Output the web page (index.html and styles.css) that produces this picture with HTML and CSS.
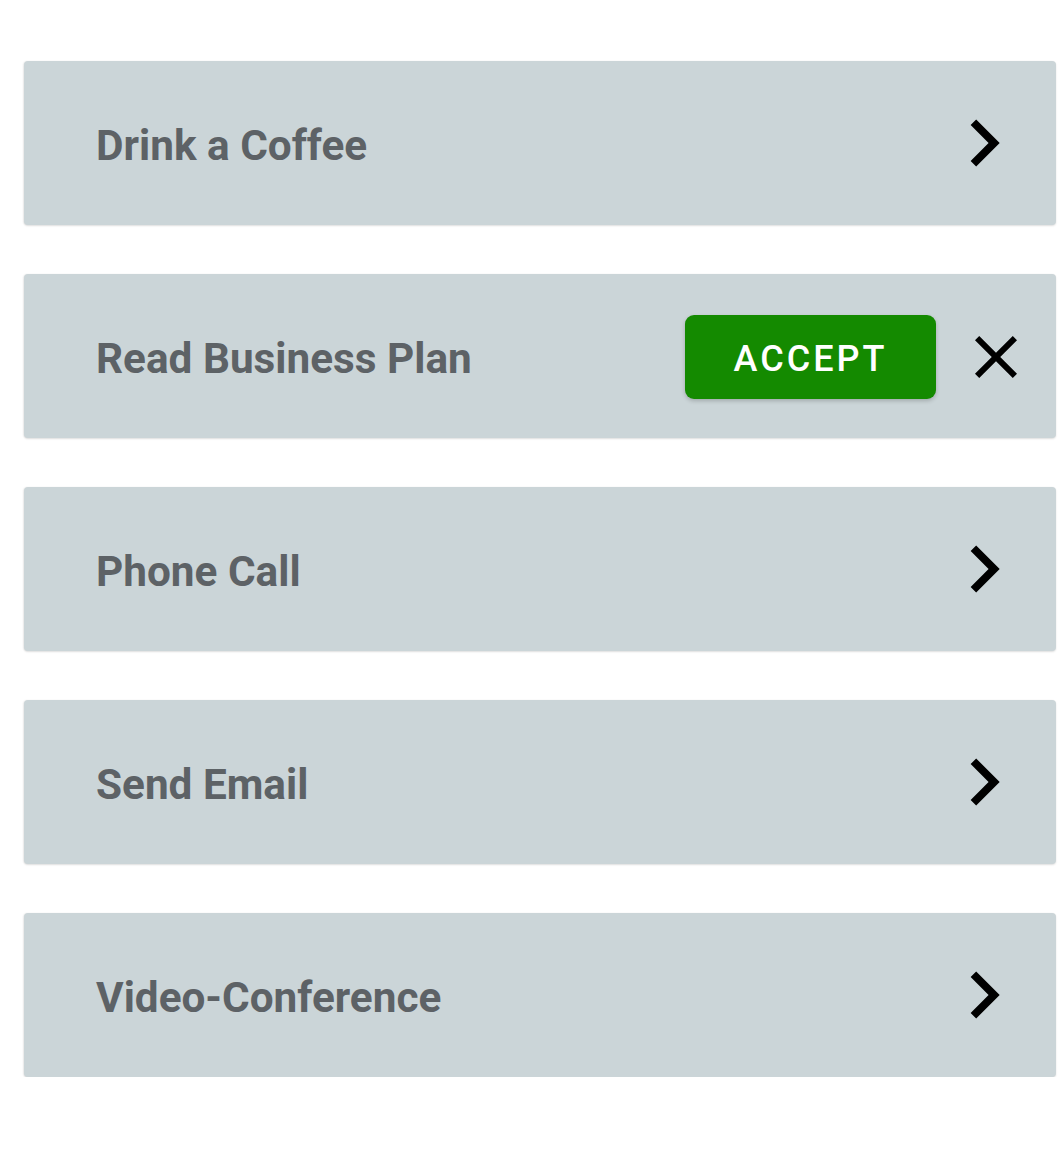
FILE: index.html
```html
<!DOCTYPE html>
<html>
<head>
<meta charset="utf-8">
<link rel="stylesheet" href="styles.css">
</head>
<body>
<div class="list">
  <div class="card">
    <span class="label">Drink a Coffee</span>
    <svg class="icon chevron" viewBox="0 0 24 24"><path d="M10 6L8.59 7.41 13.17 12l-4.58 4.59L10 18l6-6z"/></svg>
  </div>
  <div class="card">
    <span class="label">Read Business Plan</span>
    <div class="actions">
      <button class="accept">ACCEPT</button>
      <svg class="icon close" viewBox="0 0 24 24"><path d="M19 6.41L17.59 5 12 10.59 6.41 5 5 6.41 10.59 12 5 17.59 6.41 19 12 13.41 17.59 19 19 17.59 13.41 12z"/></svg>
    </div>
  </div>
  <div class="card">
    <span class="label">Phone Call</span>
    <svg class="icon chevron" viewBox="0 0 24 24"><path d="M10 6L8.59 7.41 13.17 12l-4.58 4.59L10 18l6-6z"/></svg>
  </div>
  <div class="card">
    <span class="label">Send Email</span>
    <svg class="icon chevron" viewBox="0 0 24 24"><path d="M10 6L8.59 7.41 13.17 12l-4.58 4.59L10 18l6-6z"/></svg>
  </div>
  <div class="card">
    <span class="label">Video-Conference</span>
    <svg class="icon chevron" viewBox="0 0 24 24"><path d="M10 6L8.59 7.41 13.17 12l-4.58 4.59L10 18l6-6z"/></svg>
  </div>
</div>
</body>
</html>
```

FILE: styles.css
```css
html, body {
  margin: 0;
  padding: 0;
  background: #ffffff;
  font-family: Roboto, "Liberation Sans", sans-serif;
}

.list {
  display: flex;
  flex-direction: column;
  gap: 49px;
  padding: 61px 4px 0 24px;
}

.card {
  height: 164px;
  box-sizing: border-box;
  display: flex;
  align-items: center;
  justify-content: space-between;
  padding: 0 24px 0 72px;
  background: #cbd5d8;
  border-radius: 4px;
  box-shadow: 0 1px 2px rgba(0, 0, 0, 0.12), -1px 0 2px rgba(0, 0, 0, 0.06);
}

.label {
  font-size: 42.3px;
  font-weight: 700;
  color: #5d6266;
  padding-top: 4px;
}

.icon {
  fill: #000000;
  display: block;
}

.chevron {
  width: 94px;
  height: 94px;
  margin-right: 1px;
}

.actions {
  display: flex;
  align-items: center;
  gap: 24px;
  padding-top: 2px;
}

.close {
  width: 72px;
  height: 72px;
}

.accept {
  width: 251px;
  height: 84px;
  border: none;
  border-radius: 9px;
  background: #148a00;
  color: #ffffff;
  font-family: Roboto, "Liberation Sans", sans-serif;
  font-size: 36px;
  font-weight: 500;
  letter-spacing: 3px;
  box-shadow: 0 2px 4px rgba(0, 0, 0, 0.2);
  padding: 3px 0 0 0;
}
```
